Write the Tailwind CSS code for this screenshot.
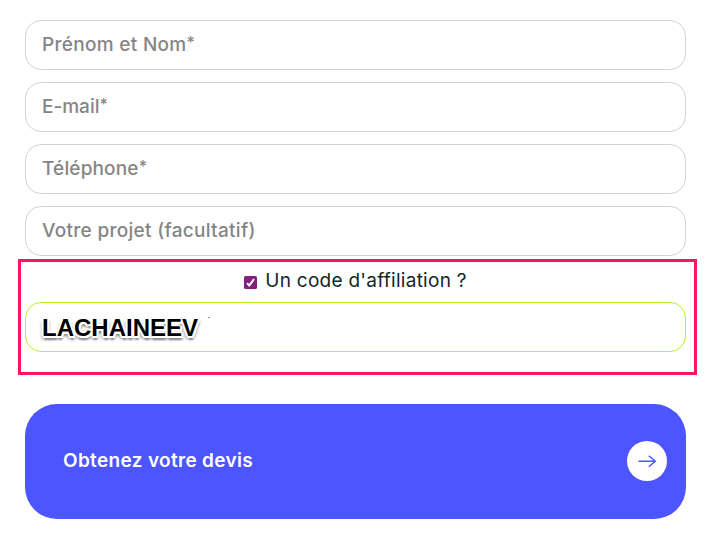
<!DOCTYPE html>
<html lang="fr">
<head>
    <meta charset="UTF-8">
    <meta name="viewport" content="width=device-width, initial-scale=1.0">
    <title>Obtenez votre devis</title>
    <script src="https://cdn.jsdelivr.net/npm/@tailwindcss/browser@4"></script>
</head>
<body class="bg-white font-['Inter',sans-serif] text-[19px] overflow-hidden">
<form class="w-[679px] ml-[18px] pt-5">
    <div class="flex flex-col gap-3 pl-[7px] pr-[11px] text-[#858585] font-medium">
        <label class="flex items-center h-[50px] rounded-[16px] border border-[#d0d4d4] px-4 whitespace-nowrap"><span class="tracking-[0.3px]">Prénom et Nom<span class="text-[16px] leading-none align-[3px]">*</span></span></label>
        <label class="flex items-center h-[50px] rounded-[16px] border border-[#d0d4d4] px-4 whitespace-nowrap"><span>E-mail<span class="text-[16px] leading-none align-[3px]">*</span></span></label>
        <label class="flex items-center h-[50px] rounded-[16px] border border-[#d0d4d4] px-4 whitespace-nowrap"><span class="tracking-[0.15px]">Téléphone<span class="text-[16px] leading-none align-[3px]">*</span></span></label>
        <label class="flex items-center h-[50px] rounded-[16px] border border-[#d0d4d4] px-4 whitespace-nowrap"><span class="tracking-[0.3px]">Votre projet (facultatif)</span></label>
    </div>

    <!-- Affiliation code -->
    <div class="mt-[3px] h-[116px] border-3 border-[#ff1464] pl-1 pr-2">
        <label class="flex items-center justify-center h-10 text-[#10272a] whitespace-nowrap">
            <svg class="w-[13px] h-[13px] mr-2 mt-px" viewBox="0 0 13 13" fill="none">
                <rect width="13" height="13" rx="1.5" fill="#84217f"/>
                <path d="M3 7.1L5.3 9.4L10 3.2" stroke="#fff" stroke-width="2"/>
            </svg>
            <span class="tracking-[0.27px] pb-0.5">Un code d'affiliation ?</span>
        </label>
        <div class="flex items-center h-[50px] rounded-[16px] border border-[#b5f22c] px-4">
            <span class="pt-0.5 font-['Liberation_Sans',sans-serif] font-bold text-[24px] text-black [text-shadow:-2px_0_0_#fff,2px_0_0_#fff,0_2px_0_#fff,0_-2px_0_#fff,-1px_2px_0_#fff,2px_2px_0_#fff,1px_4px_2px_#888,2px_2px_3px_#999,-2px_3px_3px_#aaa]">LACHAINEEV</span>
            <span class="w-0.5 h-px bg-[#999] ml-2.5 mb-5"></span>
        </div>
    </div>

    <button type="button" class="flex items-center justify-between w-[661px] h-[115px] mt-[29px] ml-[7px] pl-[38px] pr-[19px] pb-px rounded-[32px] bg-[#4c55ff] text-white font-semibold whitespace-nowrap">
        <span class="tracking-[0.33px]">Obtenez votre devis</span>
        <span class="flex items-center justify-center w-10 h-10 rounded-full bg-white">
            <svg class="w-5 h-5" viewBox="0 0 20 20" fill="none" stroke="#4c55ff" stroke-width="1.5">
                <path d="M1.5 10.3H18.5M11.8 4.8L18.3 10.3L11.8 15.8"/>
            </svg>
        </span>
    </button>
</form>
</body>
</html>
